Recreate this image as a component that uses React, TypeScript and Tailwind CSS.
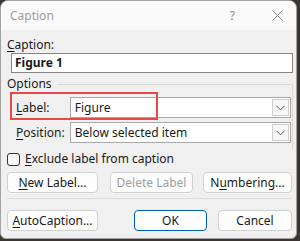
import React from "react";

const font = { fontFamily: '"Noto Sans", "Open Sans", sans-serif' };

function Btn({ children, className = "", disabled = false, primary = false }: { children: React.ReactNode; className?: string; disabled?: boolean; primary?: boolean }) {
  return (
    <div
      className={
        "h-[21px] flex items-center justify-center rounded-[4px] border text-[12px] leading-none " +
        (primary ? "border-[#005fb8] bg-[#fdfdfd] text-[#1a1a1a] " : "border-[#d1d1d1] bg-[#fdfdfd] ") +
        (disabled ? "text-[#a0a0a0] " : "text-[#1a1a1a] ") +
        className
      }
    >
      {children}
    </div>
  );
}

function Chevron() {
  return (
    <svg width="9" height="6" viewBox="0 0 9 6">
      <path d="M0.5 0.8 L4.5 4.8 L8.5 0.8" fill="none" stroke="#555" strokeWidth="1" />
    </svg>
  );
}

function Combo({ text }: { text: string }) {
  return (
    <div className="ml-auto w-[222px] h-[21px] border border-[#a8a8a8] bg-white flex items-stretch">
      <div className="flex-1 flex items-center pl-[4px] text-[12px] text-[#1a1a1a]">{text}</div>
      <div className="w-[17px] m-[1px] ml-0 border border-[#cfcfcf] bg-[#f7f7f7] flex items-center justify-center">
        <Chevron />
      </div>
    </div>
  );
}

export default function App() {
  return (
    <div className="w-[300px] h-[241px] bg-[#3b3634] overflow-hidden" style={font}>
      <div className="w-[297px] h-[239px] bg-[#f0f0f0] border border-[#a3a3a3] rounded-t-[8px] rounded-b-[6px] overflow-hidden flex flex-col">
        {/* Title bar */}
        <div className="h-[29px] bg-[#fafafa] flex items-center shrink-0">
          <div className="pl-[9px] text-[12px] text-[#9d9d9d] flex-1">Caption</div>
          <div className="text-[12px] text-[#8a8a8a] mr-[37px]">?</div>
          <svg width="11" height="11" viewBox="0 0 11 11" className="mr-[13px]">
            <path d="M0.5 0.5 L10.5 10.5 M10.5 0.5 L0.5 10.5" stroke="#8a8a8a" strokeWidth="1" />
          </svg>
        </div>
        {/* Body */}
        <div className="flex flex-col pl-[6px] pr-[3px] text-[12px] text-[#1a1a1a]">
          <div className="mt-[7px] h-[16px] leading-[16px]">
            <span className="underline underline-offset-2">C</span>aption:
          </div>
          <div className="ml-[4px] w-[282px] h-[20px] border border-[#858585] bg-white flex items-center pl-[3px] font-bold text-[12px]">
            Figure 1
          </div>
          {/* Options group */}
          <div className="mt-[4px] flex h-[14px]">
            <div className="leading-[14px] pr-[5px]">Options</div>
            <div className="flex-1 self-end h-[7px] border-t border-r border-[#d9d9d9]" />
          </div>
          <div className="relative border-r border-[#d9d9d9] pr-[1px] pb-[6px]">
            <div className="mt-[6px] flex items-center">
              <div className="pl-[9px] w-[63px]">
                <span className="underline underline-offset-2">L</span>abel:
              </div>
              <Combo text="Figure" />
            </div>
            <div className="mt-[4px] flex items-center">
              <div className="pl-[9px] w-[63px]">
                <span className="underline underline-offset-2">P</span>osition:
              </div>
              <Combo text="Below selected item" />
            </div>
            <div className="absolute left-[3px] top-[1px] w-[148px] h-[28px] border-[2.5px] border-[#e8474b]" />
          </div>
          <div className="mt-[3px] h-[14px] flex items-center">
            <div className="w-[13px] h-[13px] border border-[#333] rounded-[3px] bg-[#f8f8f8]" />
            <div className="ml-[5px]">
              <span className="underline underline-offset-2">E</span>xclude label from caption
            </div>
          </div>
          <div className="mt-[6px] flex">
            <Btn className="w-[91px]">
              <span className="underline underline-offset-2">N</span>ew Label...
            </Btn>
            <Btn className="w-[83px] ml-[12px]" disabled>
              Delete Label
            </Btn>
            <Btn className="w-[89px] ml-[10px]">
              N<span className="underline underline-offset-2">u</span>mbering...
            </Btn>
          </div>
          <div className="mt-[5px] h-px bg-[#dcdcdc] w-[285px]" />
          <div className="mt-[11px] flex">
            <Btn className="w-[91px]">
              <span className="underline underline-offset-2">A</span>utoCaption...
            </Btn>
            <Btn className="w-[73px] ml-[36px]" primary>
              OK
            </Btn>
            <Btn className="w-[74px] ml-[11px]">Cancel</Btn>
          </div>
        </div>
      </div>
    </div>
  );
}
